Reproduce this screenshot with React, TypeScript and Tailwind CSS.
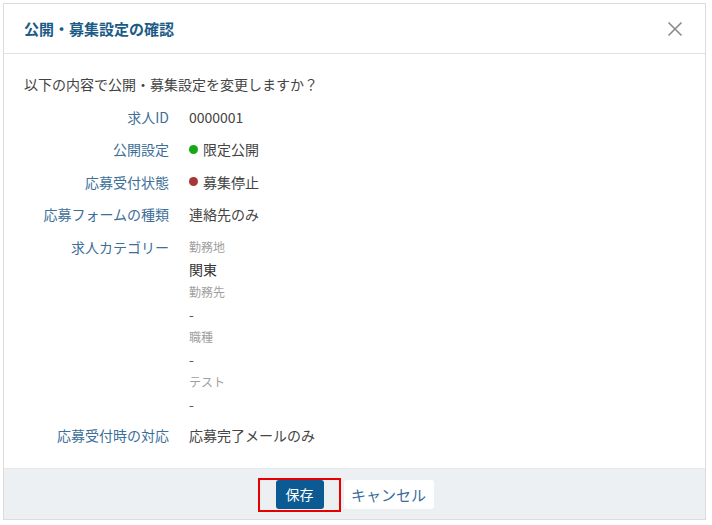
import React from 'react'

type Row = {
    label: string
    value: React.ReactNode
}

function Dot({ color }: { color: string }) {
    return <span className={`inline-block w-[9px] h-[9px] rounded-full mr-[5px] ${color}`} />
}

const categories = [
    { name: '勤務地', value: '関東', strong: true },
    { name: '勤務先', value: '-', strong: false },
    { name: '職種', value: '-', strong: false },
    { name: 'テスト', value: '-', strong: false },
]

export default function App() {
    const rows: Row[] = [
        { label: '求人ID', value: '0000001' },
        {
            label: '公開設定',
            value: (
                <span className="flex items-center">
                    <Dot color="bg-[#16a616]" />
                    限定公開
                </span>
            ),
        },
        {
            label: '応募受付状態',
            value: (
                <span className="flex items-center">
                    <Dot color="bg-[#a83636]" />
                    募集停止
                </span>
            ),
        },
        { label: '応募フォームの種類', value: '連絡先のみ' },
    ]

    return (
        <div className="w-[712px] h-[525px] bg-white font-['Noto_Sans_CJK_JP',sans-serif]">
            <div className="ml-[3px] mt-[3px] w-[703px] border border-[#dcdcdc] bg-white">
                <div className="h-[50px] flex items-center justify-between pl-5 pr-5 border-b border-[#e2e2e2]">
                    <h1 className="text-[15px] font-bold text-[#1d5b87] leading-none">公開・募集設定の確認</h1>
                    <button className="w-5 h-5 flex items-center justify-center text-[#8a8a8a]">
                        <svg width="16" height="16" viewBox="0 0 16 16" fill="none" stroke="currentColor" strokeWidth="1.6">
                            <path d="M1.5 1.5l13 13M14.5 1.5l-13 13" />
                        </svg>
                    </button>
                </div>

                <div className="px-5 pt-5 pb-[23px] text-sm text-[#444]">
                    <p className="leading-5">以下の内容で公開・募集設定を変更しますか？</p>

                    <div className="mt-[12.5px] grid grid-cols-[145px_1fr] gap-x-5 gap-y-[12.5px] leading-5">
                        {rows.map((row) => (
                            <React.Fragment key={row.label}>
                                <div className="text-right text-[#3d6f98]">{row.label}</div>
                                <div>{row.value}</div>
                            </React.Fragment>
                        ))}

                        <div className="text-right text-[#3d6f98] leading-[22.5px] -mt-[1px]">求人カテゴリー</div>
                        <div className="-mt-[1px] -mb-[3px]">
                            {categories.map((c) => (
                                <div key={c.name}>
                                    <div className="text-xs text-[#a0a0a0] leading-[22.5px]">{c.name}</div>
                                    <div className={`leading-[22.5px] ${c.strong ? 'text-[#333]' : 'text-[#555]'}`}>{c.value}</div>
                                </div>
                            ))}
                        </div>

                        <div className="text-right text-[#3d6f98]">応募受付時の対応</div>
                        <div>応募完了メールのみ</div>
                    </div>
                </div>

                <div className="bg-[#edf0f3] border-t border-[#e6e8eb] h-[51px] flex items-center justify-center gap-5">
                    <div className="relative">
                        <button className="w-12 h-[29px] rounded-[3px] bg-[#0b5a93] text-white text-sm leading-none">保存</button>
                        <span className="absolute -left-[18px] -right-[17px] -top-[2px] -bottom-[3px] border-2 border-[#e80000] pointer-events-none" />
                    </div>
                    <button className="w-[90px] h-[29px] rounded-[3px] bg-white text-[#3b6c9c] text-[15px] leading-none">キャンセル</button>
                </div>
            </div>
        </div>
    )
}
